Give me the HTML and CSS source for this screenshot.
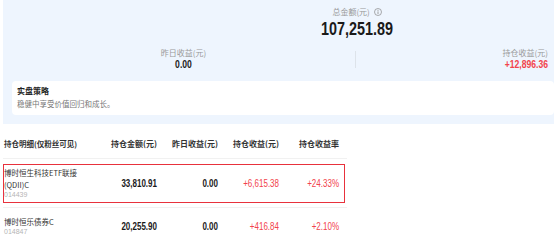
FILE: index.html
```html
<!DOCTYPE html>
<html lang="zh-CN">
<head>
    <meta charset="UTF-8">
    <meta name="viewport" content="width=device-width, initial-scale=1.0">
    <title>持仓详情</title>
    <link rel="stylesheet" href="styles.css">
</head>
<body>
    <div class="page">
        <section class="overview">
            <div class="total">
                <div class="label">总金额(元)
                    <svg class="info-icon" width="8" height="8" viewBox="0 0 8 8">
                        <circle cx="4" cy="4" r="3.5" fill="none" stroke="#888" stroke-width="0.7"/>
                        <line x1="4" y1="3.4" x2="4" y2="6" stroke="#888" stroke-width="0.8"/>
                        <circle cx="4" cy="2.3" r="0.5" fill="#888"/>
                    </svg>
                </div>
                <div class="total-value">107,251.89</div>
            </div>

            <div class="stats">
                <div class="stat stat-center">
                    <div class="label">昨日收益(元)</div>
                    <div class="stat-value">0.00</div>
                </div>
                <div class="divider"></div>
                <div class="stat stat-right">
                    <div class="label">持仓收益(元)</div>
                    <div class="stat-value up">+12,896.36</div>
                </div>
            </div>

            <div class="strategy">
                <div class="strategy-title">实盘策略</div>
                <div class="strategy-desc">稳健中享受价值回归和成长。</div>
            </div>
        </section>

        <div class="holdings">
            <div class="row head">
                <div class="row-inner">
                    <div class="cell name">持仓明细(仅粉丝可见)</div>
                    <div class="cell num">持仓金额(元)</div>
                    <div class="cell num">昨日收益(元)</div>
                    <div class="cell num">持仓收益(元)</div>
                    <div class="cell num">持仓收益率</div>
                </div>
            </div>
            <div class="row">
                <div class="row-inner selected">
                    <div class="cell name">
                        <div class="fund-name">博时恒生科技ETF联接(QDII)C</div>
                        <div class="fund-code">014439</div>
                    </div>
                    <div class="cell num amount">33,810.91</div>
                    <div class="cell num amount">0.00</div>
                    <div class="cell num up">+6,615.38</div>
                    <div class="cell num up">+24.33%</div>
                </div>
            </div>
            <div class="row">
                <div class="row-inner">
                    <div class="cell name">
                        <div class="fund-name">博时恒乐债券C</div>
                        <div class="fund-code">014847</div>
                    </div>
                    <div class="cell num amount">20,255.90</div>
                    <div class="cell num amount">0.00</div>
                    <div class="cell num up">+416.84</div>
                    <div class="cell num up">+2.10%</div>
                </div>
            </div>
        </div>
    </div>
</body>
</html>
```

FILE: styles.css
```css
body {
    margin: 0;
    background: #fff;
    font-family: "Noto Sans CJK SC", "Noto Sans", sans-serif;
    color: #222;
}
.page {
    padding-left: 3px;
    overflow: hidden;
}
.overview {
    background-color: #eef5fe;
    padding: 6px 0 9px 9px;
}
.label {
    font-size: 8px;
    line-height: 11px;
    color: #999;
}
.total {
    width: 166px;
    margin-left: 262px;
    text-align: center;
}
.info-icon {
    vertical-align: -1px;
    margin-left: 2px;
}
/* digits in the original font are narrow, squeeze them a bit */
.total-value {
    margin-top: 2px;
    font-family: "Liberation Sans", Arial, sans-serif;
    font-size: 18px;
    font-weight: bold;
    line-height: 20px;
    color: #1a1a1a;
    transform: scaleX(0.8);
}
.stats {
    display: grid;
    grid-template-columns: 343px 1px 1fr;
    align-items: center;
    margin-top: 8px;
    padding-right: 6px;
}
.stat-center {
    text-align: center;
}
.stat-right {
    text-align: right;
}
.divider {
    height: 17px;
    background-color: #dde3ea;
}
.stat-value {
    font-family: "Liberation Sans", Arial, sans-serif;
    font-size: 10.5px;
    font-weight: bold;
    line-height: 13px;
    color: #1a1a1a;
    transform: scaleX(0.82);
}
.stat-right .stat-value {
    transform-origin: right center;
}
.up {
    color: #f2434c !important;
}
.strategy {
    margin-top: 10px;
    padding: 4px 5px 5px;
    background: #fff;
    border-radius: 4px;
}
.strategy-title {
    font-size: 8px;
    font-weight: bold;
    line-height: 11px;
    color: #222;
}
.strategy-desc {
    margin-top: 2px;
    font-size: 7.5px;
    line-height: 12px;
    color: #777;
}
.holdings {
    width: 344px;
}
.row {
    padding: 5px 0 4px;
    border-bottom: 1px solid #f1f1f1;
}
.row.head {
    padding: 11px 0 5px;
}
.row-inner {
    display: grid;
    grid-template-columns: 96px 57px 61px 61px 60px;
    align-items: center;
    margin-right: 2px;
    padding: 2px 5px 3px 0;
    border: 1px solid transparent;
}
.row-inner.selected {
    border-color: #e8313c;
}
.head .cell {
    font-size: 8px;
    font-weight: bold;
    line-height: 11px;
    color: #333;
}
.head .name {
    font-size: 7.5px;
}
.num {
    text-align: right;
}
.fund-name {
    font-size: 7.5px;
    line-height: 12px;
    color: #333;
}
.fund-code {
    font-family: "Liberation Sans", Arial, sans-serif;
    font-size: 7px;
    line-height: 8px;
    color: #b5b5b5;
}
.row:not(.head) .num {
    font-family: "Liberation Sans", Arial, sans-serif;
    font-size: 10px;
    transform: scaleX(0.8);
    transform-origin: right center;
}
.amount {
    font-weight: bold;
    color: #1a1a1a;
}
```
